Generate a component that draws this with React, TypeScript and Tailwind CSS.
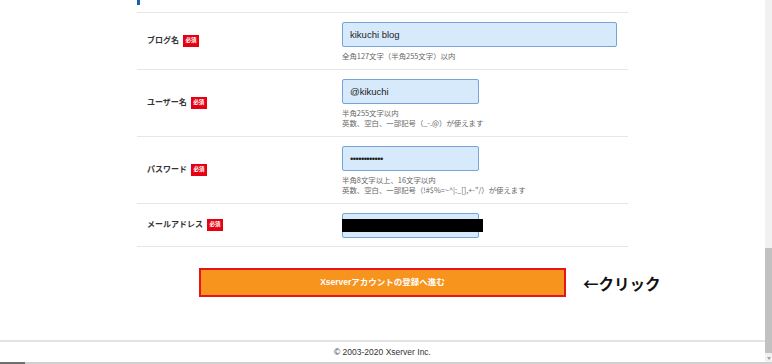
import React from 'react';

type Row = {
  label: string;
  value: string;
  type?: string;
  wide?: boolean;
  hints: string[];
  redacted?: boolean;
};

const rows: Row[] = [
  { label: 'ブログ名', value: 'kikuchi blog', wide: true, hints: ['全角127文字（半角255文字）以内'] },
  {
    label: 'ユーザー名',
    value: '@kikuchi',
    hints: ['半角255文字以内', '英数、空白、一部記号（_-.@）が使えます'],
  },
  {
    label: 'パスワード',
    value: 'kikuchi12345',
    type: 'password',
    hints: ['半角8文字以上、16文字以内', '英数、空白、一部記号（!#$%=~^|:_[],+-"/）が使えます'],
  },
  { label: 'メールアドレス', value: '', hints: [], redacted: true },
];

const font = "font-['Liberation_Sans','Noto_Sans_CJK_JP',sans-serif]";

function FormRow({ row }: { row: Row }) {
  return (
    <div className="flex border-t border-[#e6e6e6]">
      <div className="flex w-[205px] items-center pl-[10px]">
        <span className="text-[8px] font-bold text-[#333]">{row.label}</span>
        <span className="ml-[4px] flex h-[12px] w-[16px] items-center justify-center bg-[#e60012] text-[5.5px] font-bold leading-none text-white">
          必須
        </span>
      </div>
      <div className="flex flex-col pt-[9px] pb-[8px]">
        <div className="relative">
          <input
            readOnly
            type={row.type ?? 'text'}
            value={row.value}
            className={`block h-[25px] ${row.wide ? 'w-[275px]' : 'w-[137px]'} rounded-[2px] border border-[#76a4d6] bg-[#d7eafc] px-[7px] text-[9.5px] text-[#222] outline-none ${row.type === 'password' ? 'tracking-[-0.6px]' : ''}`}
          />
          {row.redacted && (
            <div className="absolute left-0 top-[6px] h-[13px] w-[141px] bg-black" />
          )}
        </div>
        {row.hints.length > 0 && (
          <div className="mt-[4px] font-['Noto_Sans_CJK_JP',sans-serif] text-[7.4px] leading-[10px] text-[#666]">
            {row.hints.map((h) => (
              <div key={h}>{h}</div>
            ))}
          </div>
        )}
      </div>
    </div>
  );
}

export default function App() {
  return (
    <div className={`flex h-[364px] w-[772px] flex-col overflow-hidden bg-white ${font}`}>
      <div className="flex h-[362px]">
        <main className="flex w-[765px] flex-col">
          <div className="mx-auto w-[491px]">
            <div className="flex h-[5px] items-end overflow-hidden">
              <div className="h-full w-[3px] bg-[#1b5fb0]" />
              <span className="ml-[100px] translate-y-[7px] text-[9px] leading-[9px] text-[#999]">
                一一
              </span>
            </div>
            <div className="mt-[7px] border-b border-[#e6e6e6]">
              {rows.map((r) => (
                <FormRow key={r.label} row={r} />
              ))}
            </div>
          </div>

          <div className="relative mx-auto mt-[21px] w-[367px]">
            <button className="flex h-[29px] w-full items-center justify-center border-2 border-[#e8141c] bg-[#f7941d] text-[8.5px] font-bold text-white">
              Xserverアカウントの登録へ進む
            </button>
            <span className="absolute left-[calc(100%+17px)] top-[4px] whitespace-nowrap font-['Noto_Sans_CJK_JP',sans-serif] text-[15.5px] font-bold text-[#111]">
              ←クリック
            </span>
          </div>

          <footer className="mt-[43px] flex h-[22px] items-center justify-center border-t-2 border-[#e3e3e3] text-[8.5px] text-[#333]">
            © 2003-2020 Xserver Inc.
          </footer>
        </main>

        <div className="flex w-[7px] flex-col bg-[#f1f1f1]">
          <div className="mt-[248px] h-[105px] bg-[#c1c1c1]" />
          <div className="mt-[4px] flex justify-center">
            <div className="h-0 w-0 border-x-[2px] border-t-[3px] border-x-transparent border-t-[#a3a3a3]" />
          </div>
        </div>
      </div>
      <div className="flex h-[2px]">
        <div className="w-[25px] bg-[#6f6f6f]" />
        <div className="flex-1 bg-[#d0d0d0]" />
      </div>
    </div>
  );
}
